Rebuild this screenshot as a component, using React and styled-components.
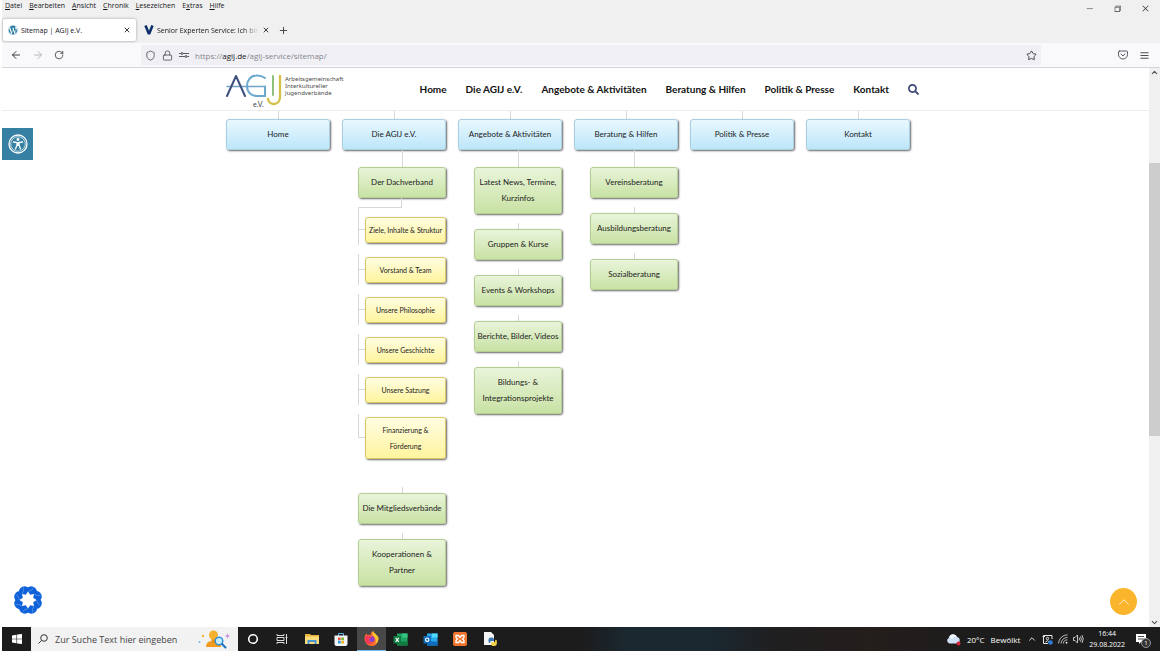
import React from "react";
import styled, { createGlobalStyle } from "styled-components";
import {
  FaSearch,
  FaWordpress,
} from "react-icons/fa";
import {
  VscChromeMinimize,
  VscChromeRestore,
  VscChromeClose,
} from "react-icons/vsc";
import {
  LuArrowLeft,
  LuArrowRight,
  LuRotateCw,
  LuShield,
  LuLock,
  LuStar,
  LuMenu,
  LuPlus,
  LuX,
  LuChevronUp,
  LuChevronDown,
} from "react-icons/lu";

const menus = ["Datei", "Bearbeiten", "Ansicht", "Chronik", "Lesezeichen", "Extras", "Hilfe"];
const accessKey = { Extras: 1 };

const navLinks = [
  "Home",
  "Die AGIJ e.V.",
  "Angebote & Aktivitäten",
  "Beratung & Hilfen",
  "Politik & Presse",
  "Kontakt",
];

const sitemap = [
  { name: "Home" },
  {
    name: "Die AGIJ e.V.",
    pages: [
      {
        name: "Der Dachverband",
        pages: [
          "Ziele, Inhalte & Struktur",
          "Vorstand & Team",
          "Unsere Philosophie",
          "Unsere Geschichte",
          "Unsere Satzung",
          "Finanzierung & Förderung",
        ],
      },
      { name: "Die Mitgliedsverbände" },
      { name: "Kooperationen & Partner" },
    ],
  },
  {
    name: "Angebote & Aktivitäten",
    pages: [
      { name: "Latest News, Termine, Kurzinfos" },
      { name: "Gruppen & Kurse" },
      { name: "Events & Workshops" },
      { name: "Berichte, Bilder, Videos" },
      { name: "Bildungs- & Integrationsprojekte" },
    ],
  },
  {
    name: "Beratung & Hilfen",
    pages: [
      { name: "Vereinsberatung" },
      { name: "Ausbildungsberatung" },
      { name: "Sozialberatung" },
    ],
  },
  { name: "Politik & Presse" },
  { name: "Kontakt" },
];

const Logo = () => (
  <svg width="56" height="32" viewBox="0 0 56 32" fill="none" strokeWidth="2" strokeLinecap="round">
    <path d="M39 12.500 H1" stroke="#6fa3c8" strokeWidth="1.500" />
    <path d="M1 22 L10 2 L19 22" stroke="#3d4f7c" strokeLinejoin="round" />
    <path d="M39 4 C36 2 33 1.300 30 1.600 C24 2 21 7 21 12 C21 18 25 22 31 22 H39 V12.500" stroke="#6aa9cd" />
    <path d="M47 2 V21" stroke="#8fc07c" />
    <path d="M54 2 V23 C54 32 43 32 42 25" stroke="#d4c047" strokeWidth="2.300" />
  </svg>
);

const AccessIcon = () => (
  <svg width="20" height="20" viewBox="0 0 20 20" fill="none" stroke="#fff">
    <circle cx="10" cy="10" r="9" strokeWidth="1.300" />
    <circle cx="10" cy="10" r="7.300" strokeWidth="0.700" />
    <circle cx="10" cy="5.500" r="1.400" fill="#fff" stroke="none" />
    <path d="M5.500 8 L9 8.600 V11 L7.500 15 M14.500 8 L11 8.600 V11 L12.500 15" strokeWidth="1.300" strokeLinecap="round" />
    <path d="M9 8.500 h2 v3.500 h-2 z" fill="#fff" stroke="none" />
  </svg>
);

const petals = [0, 45, 90, 135, 180, 225, 270, 315];

const CookieIcon = () => (
  <svg width="30" height="30" viewBox="-15 -15 30 30">
    {petals.map((a) => (
      <circle key={a} transform={`rotate(${a + 22})`} cy="-8.700" r="5.700" fill="#0f62d9" />
    ))}
    <path
      d="M0 -8.500 L2.200 -5.200 L6 -6 L5.200 -2.200 L8.500 0 L5.200 2.200 L6 6 L2.200 5.200 L0 8.500 L-2.200 5.200 L-6 6 L-5.200 2.200 L-8.500 0 L-5.200 -2.200 L-6 -6 L-2.200 -5.200 Z"
      fill="#fff"
    />
    {petals.map((a) => (
      <path
        key={a}
        transform={`rotate(${a})`}
        d="M0 -8.500 Q4 -9 5.500 -12.500"
        fill="none"
        stroke="#6ea5f0"
        strokeWidth="0.600"
      />
    ))}
  </svg>
);

const PermIcon = () => (
  <svg width="10" height="10" viewBox="0 0 10 10" fill="none" stroke="#5b5b66">
    <path d="M0 3.500 H2 M4 3.500 H10 M0 6.500 H6 M8 6.500 H10" />
    <path d="M3 2 V5 M7 5 V8" strokeWidth="1.400" />
  </svg>
);

const PocketIcon = () => (
  <svg width="10" height="10" viewBox="0 0 10 10" fill="none" stroke="#5b5b66" strokeLinecap="round" strokeLinejoin="round">
    <path d="M1.500 1 H8.500 Q9.500 1 9.500 2 V4.500 A4.500 4.500 0 0 1 0.500 4.500 V2 Q0.500 1 1.500 1 Z" />
    <path d="M3 4 L5 6 L7 4" />
  </svg>
);

const VIcon = () => (
  <svg width="10" height="10" viewBox="0 0 10 10" fill="none" stroke="#0b2f6b" strokeWidth="2.600">
    <path d="M1.500 0.500 L5 9 L8.500 0.500" strokeLinejoin="bevel" />
  </svg>
);

const WindowsIcon = () => (
  <svg width="10" height="10" viewBox="0 0 10 10" fill="#fff">
    <path d="M0 1.400 L4.500 0.700 V4.700 H0 Z M5.100 0.600 L10 0 V4.700 H5.100 Z M0 5.300 H4.500 V9.300 L0 8.600 Z M5.100 5.300 H10 V10 L5.100 9.400 Z" />
  </svg>
);

const LensIcon = () => (
  <svg width="10" height="10" viewBox="0 0 10 10" fill="none" stroke="#333">
    <circle cx="6" cy="4" r="3.300" />
    <path d="M3.600 6.400 L0.500 9.500" />
  </svg>
);

const SearchArt = () => (
  <svg width="34" height="20" viewBox="0 0 34 20">
    <path d="M8 18 Q8 12 14 12 H18 Q23 12 23 18 Z" fill="#f49a1f" />
    <path d="M13.500 9 h4 v5 h-4 z" fill="#e8901a" />
    <circle cx="15.500" cy="6" r="4.500" fill="#f6b22c" />
    <circle cx="21" cy="12" r="3.800" fill="#c7ebfb" stroke="#2f8fd6" strokeWidth="1.400" />
    <path d="M24 15 L27.500 18.500" stroke="#1a6fc0" strokeWidth="2" strokeLinecap="round" />
    <circle cx="5" cy="7" r="1.200" fill="#f5b73e" />
    <circle cx="1.500" cy="13" r="1" fill="#6cb7ee" />
    <path d="M29.500 4 L30.200 6.200 L32.500 7 L30.200 7.800 L29.500 10 L28.800 7.800 L26.500 7 L28.800 6.200 Z" fill="#c490dd" />
  </svg>
);

const CortanaIcon = () => (
  <svg width="12" height="12" viewBox="0 0 12 12" fill="none" stroke="#fff" strokeWidth="1.600">
    <circle cx="6" cy="6" r="4.300" />
  </svg>
);

const TaskViewIcon = () => (
  <svg width="12" height="12" viewBox="0 0 12 12" fill="none" stroke="#ddd">
    <path d="M1 1 V2.500 H8 V1 M1 11 V9.500 H8 V11 M1 4.500 H8 V7.500 H1 Z M10.500 1 V11 M9.500 4.500 H11.500" />
  </svg>
);

const FolderIcon = () => (
  <svg width="14" height="12" viewBox="0 0 14 12">
    <path d="M0 1 H5 L6 2 H14 V11 H0 Z" fill="#e9b43c" />
    <path d="M0 3.500 H14 V11 H0 Z" fill="#fbdc7c" />
    <path d="M2.500 7 H11.500 V11 H9.500 V9 H4.500 V11 H2.500 Z" fill="#4a94cf" />
  </svg>
);

const StoreIcon = () => (
  <svg width="14" height="14" viewBox="0 0 14 14">
    <path d="M4.500 4 V1.500 H9.500 V4" fill="none" stroke="#5fb4e8" />
    <path d="M0.500 3.500 H13.500 V12 Q13.500 14 11.500 14 H2.500 Q0.500 14 0.500 12 Z" fill="#f3f6f8" />
    <path d="M4 5.500 H6.700 V8.200 H4 Z" fill="#e8563a" />
    <path d="M7.300 5.500 H10 V8.200 H7.300 Z" fill="#7cb738" />
    <path d="M4 8.800 H6.700 V11.500 H4 Z" fill="#2b9be0" />
    <path d="M7.300 8.800 H10 V11.500 H7.300 Z" fill="#f4b61e" />
  </svg>
);

const FirefoxIcon = () => (
  <svg width="15" height="15" viewBox="0 0 14 14">
    <path d="M7 14 A6.700 6.700 0 0 1 0.500 7 Q0.500 4 2.200 2 L3 4 Q5 3 6 4 Q6 1.500 8.500 0 Q9 2 11 3 Q13.700 5 13.500 8 A6.600 6.600 0 0 1 7 14 Z" fill="#ff6a2b" />
    <path d="M8.500 0 Q9 2 11 3 Q13.700 5 13.500 8 Q13 11 10.500 12.500 Q12 8 9 5 Q7 3 8.500 0 Z" fill="#ffc62e" />
    <circle cx="7.300" cy="7.500" r="2.700" fill="#8d3ecb" />
    <path d="M1 5 Q4 4 7 6 Q5.500 8 4 7 Q4 11 8.500 11.500 Q4 13.500 1.500 10 Z" fill="#f5345c" />
  </svg>
);

const OfficeIcon = ({ back, mid, front, mark }) => (
  <svg width="15" height="13" viewBox="0 0 15 13">
    <path d="M4 0.500 H14.500 V12.500 H4 Z" fill={mid} />
    <path d="M9 0.500 H14.500 V4.500 H9 Z" fill={back} />
    <path d="M4 8.500 H14.500 V12.500 H4 Z" fill={front} />
    <path d="M0.500 3 H8 V10.500 H0.500 Z" fill={front} />
    {mark === "ring" ? (
      <circle cx="4.200" cy="6.700" r="1.700" fill="none" stroke="#fff" strokeWidth="1.100" />
    ) : (
      <path d="M2.700 4.800 L5.800 8.800 M5.800 4.800 L2.700 8.800" stroke="#fff" strokeWidth="1.100" />
    )}
  </svg>
);

const XamppIcon = () => (
  <svg width="14" height="14" viewBox="0 0 14 14">
    <rect width="14" height="14" rx="2" fill="#f0752e" />
    <path
      d="M3 3.500 H5.500 L7 5.500 L8.500 3.500 H11 V5.500 L9.500 7 L11 8.500 V10.500 H8.500 L7 8.500 L5.500 10.500 H3 V8.500 L4.500 7 L3 5.500 Z"
      fill="none"
      stroke="#fff"
      strokeWidth="1.300"
    />
  </svg>
);

const PythonIcon = () => (
  <svg width="14" height="14" viewBox="0 0 14 14">
    <path d="M1 0 H8 L11 3 V13 H1 Z" fill="#f4f4f4" />
    <path d="M5.500 9.500 V7.500 Q5.500 5.500 8 5.500 H9 Q11 5.500 11 7.500 V9 H8.500 Q7 9 7 11 Q5.500 11 5.500 9.500 Z" fill="#3d79b0" />
    <path d="M13.800 9 V11.500 Q13.800 14 11 14 H10 Q8 14 8 12.300 V10.300 H11.500 Q12.300 10 12.300 7.800 Q13.800 7.800 13.800 9 Z" fill="#f6d44a" />
  </svg>
);

const CloudIcon = () => (
  <svg width="15" height="13" viewBox="0 0 15 13">
    <path d="M3.500 10.500 A3 3 0 0 1 3 4.800 A4.200 4.200 0 0 1 11 4 A3.300 3.300 0 0 1 11 10.500 Z" fill="#cfe2f8" />
    <path d="M5 1.800 A4.200 4.200 0 0 1 11 4 Q8 3 6 6 Q4 4 3 4.800 Q3.500 2.500 5 1.800 Z" fill="#eef5fd" />
    <circle cx="12.500" cy="10.500" r="2" fill="#d4243c" />
  </svg>
);

const MeetIcon = () => (
  <svg width="11" height="11" viewBox="0 0 11 11" fill="none" stroke="#e8e8e8">
    <path d="M6 9.500 H1.500 V1.500 H10 V5 M0.500 2.500 H3" />
    <circle cx="5.500" cy="4.500" r="1.200" />
    <path d="M3.500 8 Q5.500 5.500 7.500 8" />
    <circle cx="8.500" cy="8.500" r="2.300" fill="#2f7fd8" stroke="none" />
  </svg>
);

const WifiIcon = () => (
  <svg width="10" height="10" viewBox="0 0 10 10" fill="none" stroke="#c8c8c8" strokeWidth="0.900">
    <path d="M0.500 9.500 A9 9 0 0 1 9.500 0.800 M3 9.500 A6.500 6.500 0 0 1 9.500 3.400 M5.300 9.500 A4 4 0 0 1 9.500 5.900" />
    <circle cx="8.500" cy="8.700" r="0.900" fill="#fff" stroke="none" />
  </svg>
);

const SoundIcon = () => (
  <svg width="11" height="10" viewBox="0 0 11 10" fill="none" stroke="#e8e8e8" strokeWidth="0.800">
    <path d="M0.500 3.500 H2 L4.500 1 V9 L2 6.500 H0.500 Z M6 3.500 Q7 5 6 6.500 M7.500 2.300 Q9.200 5 7.500 7.700 M9 1 Q11.500 5 9 9" />
  </svg>
);

const NoticeIcon = () => (
  <svg width="10" height="10" viewBox="0 0 10 10" fill="#fff">
    <path d="M0 0 H10 V8 H5 L3 10 V8 H0 Z" />
    <path d="M2 2.500 H8 M2 5 H8" stroke="#1d1d1d" strokeWidth="0.800" />
  </svg>
);

const App = () => {
  return (
    <Window>
      <GlobalStyle />
      <TitleBar>
        <MenuBar>
          {menus.map((menu) => {
            const at = accessKey[menu] || 0;
            return (
              <MenuButton key={menu}>
                {menu.slice(0, at)}
                <u>{menu[at]}</u>
                {menu.slice(at + 1)}
              </MenuButton>
            );
          })}
        </MenuBar>
        <WindowButtons>
          <IconButton aria-label="Minimieren"><VscChromeMinimize size={9} /></IconButton>
          <IconButton aria-label="Verkleinern"><VscChromeRestore size={9} /></IconButton>
          <IconButton aria-label="Schließen"><VscChromeClose size={9} /></IconButton>
        </WindowButtons>
      </TitleBar>

      <TabBar>
        <Tab $active>
          <FaWordpress size={10} color="#1b769c" />
          <TabTitle>Sitemap | AGIJ e.V.</TabTitle>
          <IconButton aria-label="Tab schließen"><LuX size={8} strokeWidth={3} /></IconButton>
        </Tab>
        <Tab>
          <VIcon />
          <TabTitle $fade>Senior Experten Service: Ich bin</TabTitle>
          <IconButton aria-label="Tab schließen"><LuX size={8} strokeWidth={3} /></IconButton>
        </Tab>
        <NewTab aria-label="Neuer Tab"><LuPlus size={11} /></NewTab>
      </TabBar>

      <Toolbar>
        <HistoryButtons>
          <IconButton aria-label="Zurück"><LuArrowLeft size={12} /></IconButton>
          <IconButton aria-label="Vor" disabled><LuArrowRight size={12} /></IconButton>
          <IconButton aria-label="Neu laden"><LuRotateCw size={10} /></IconButton>
        </HistoryButtons>
        <UrlBar>
          <LuShield size={11} />
          <LuLock size={11} />
          <PermIcon />
          <Url>
            https://<b>agij.de</b>/agij-service/sitemap/
          </Url>
          <IconButton aria-label="Lesezeichen hinzufügen"><LuStar size={11} /></IconButton>
        </UrlBar>
        <ToolbarEnd>
          <IconButton aria-label="Pocket"><PocketIcon /></IconButton>
          <IconButton aria-label="Menü"><LuMenu size={11} /></IconButton>
        </ToolbarEnd>
      </Toolbar>

      <Viewport>
        <Page>
          <SiteHeader>
            <HeaderInner>
              <Brand href="#">
                <LogoMark>
                  <Logo />
                  <LogoSuffix>e.V.</LogoSuffix>
                </LogoMark>
                <Claim>
                  Arbeitsgemeinschaft
                  <br />
                  Interkultureller
                  <br />
                  Jugendverbände
                </Claim>
              </Brand>
              <Nav>
                {navLinks.map((link) => (
                  <NavLink key={link} href="#">{link}</NavLink>
                ))}
                <IconButton aria-label="Suche"><FaSearch size={11} color="#3d4a78" /></IconButton>
              </Nav>
            </HeaderInner>
          </SiteHeader>

          <Tree>
            {sitemap.map((section) => (
              <Branch key={section.name}>
                <Stem $length={8} />
                <SectionLink href="#">{section.name}</SectionLink>
                {section.pages && (
                  <PageList>
                    {section.pages.map((page, i) => (
                      <PageItem key={page.name}>
                        <Stem $length={i === 0 ? 17 : 6} />
                        <PageLink href="#">{page.name}</PageLink>
                        {page.pages && (
                          <>
                            <Elbow />
                            <SubList>
                              {page.pages.map((sub) => (
                                <SubItem key={sub}>
                                  <Rail>
                                    <RailTop />
                                    <RailBottom />
                                  </Rail>
                                  <SubLink href="#">{sub}</SubLink>
                                </SubItem>
                              ))}
                            </SubList>
                          </>
                        )}
                      </PageItem>
                    ))}
                  </PageList>
                )}
              </Branch>
            ))}
          </Tree>

          <AccessButton aria-label="Barrierefreiheit"><AccessIcon /></AccessButton>
          <CookieButton aria-label="Cookie-Einstellungen"><CookieIcon /></CookieButton>
          <TopButton aria-label="Nach oben"><LuChevronUp size={18} strokeWidth={1} /></TopButton>
        </Page>
        <Scrollbar>
          <LuChevronUp size={9} strokeWidth={3} />
          <Track>
            <Thumb />
          </Track>
          <LuChevronDown size={9} strokeWidth={3} />
        </Scrollbar>
      </Viewport>

      <Taskbar>
        <TaskButton aria-label="Start"><WindowsIcon /></TaskButton>
        <TaskSearch>
          <LensIcon />
          <TaskInput aria-label="Suche" placeholder="Zur Suche Text hier eingeben" />
          <SearchArt />
        </TaskSearch>
        <TaskApps>
          <TaskButton aria-label="Cortana"><CortanaIcon /></TaskButton>
          <TaskButton aria-label="Taskansicht"><TaskViewIcon /></TaskButton>
          <TaskButton aria-label="Explorer"><FolderIcon /></TaskButton>
          <TaskButton aria-label="Store"><StoreIcon /></TaskButton>
          <TaskButton aria-label="Firefox" $active><FirefoxIcon /></TaskButton>
          <TaskButton aria-label="Excel">
            <OfficeIcon back="#33c481" mid="#21a366" front="#107c41" />
          </TaskButton>
          <TaskButton aria-label="Outlook">
            <OfficeIcon back="#50d9ff" mid="#28a8ea" front="#0f6cbd" mark="ring" />
          </TaskButton>
          <TaskButton aria-label="XAMPP"><XamppIcon /></TaskButton>
          <TaskButton aria-label="Python"><PythonIcon /></TaskButton>
        </TaskApps>
        <Tray>
          <Weather>
            <CloudIcon />
            <span>20°C</span>
            <span>Bewölkt</span>
          </Weather>
          <LuChevronUp size={10} />
          <MeetIcon />
          <WifiIcon />
          <SoundIcon />
          <Clock>
            <span>16:44</span>
            <span>29.08.2022</span>
          </Clock>
          <Notice>
            <NoticeIcon />
            <Badge>1</Badge>
          </Notice>
        </Tray>
      </Taskbar>
    </Window>
  );
};

export default App;

const GlobalStyle = createGlobalStyle`
  * {
    box-sizing: border-box;
  }
  body {
    margin: 0;
    background: #fff;
    font-family: "Open Sans", "Noto Sans", sans-serif;
  }
  a {
    color: inherit;
    text-decoration: none;
  }
  ul {
    margin: 0;
    padding: 0;
    list-style: none;
  }
  svg {
    display: block;
    flex: none;
  }
`;

const Window = styled.div`
  display: flex;
  flex-direction: column;
  height: 100vh;
  padding-left: 2px;
  color: #15141a;
`;

const TitleBar = styled.div`
  display: flex;
  justify-content: space-between;
  height: 17px;
  background: #f0f0f0;
`;

const MenuBar = styled.div`
  display: flex;
  align-items: flex-start;
  gap: 7px;
  padding-left: 3px;
`;

const MenuButton = styled.button`
  padding: 0;
  border: none;
  background: none;
  color: #15141a;
  font-family: inherit;
  font-size: 7px;
  line-height: 12px;
`;

const WindowButtons = styled.div`
  display: flex;
  align-items: center;
  gap: 19px;
  padding-right: 10px;
`;

const IconButton = styled.button`
  display: flex;
  padding: 0;
  border: none;
  background: none;
  color: #3b3b42;

  &:disabled {
    color: #b8b8bf;
  }
`;

const NewTab = styled(IconButton)`
  margin-left: 3px;
`;

const TabBar = styled.div`
  display: flex;
  align-items: center;
  gap: 3px;
  height: 26px;
  padding: 0 1px;
  background: #f0f0f0;
`;

const Tab = styled.div`
  display: flex;
  align-items: center;
  gap: 3px;
  width: 133px;
  height: 22px;
  padding: 0 5px;
  border-radius: 2px;
  background: ${(props) => (props.$active ? "#fff" : "none")};
  box-shadow: ${(props) => (props.$active ? "0 0 3px #999" : "none")};
`;

const TabTitle = styled.span`
  flex: 1;
  white-space: nowrap;
  font-size: 7px;
  mask-image: ${(props) =>
    props.$fade ? "linear-gradient(to right, #000 85%, transparent)" : "none"};
`;

const Toolbar = styled.div`
  display: flex;
  align-items: center;
  height: 25px;
  border-bottom: 1px solid #d4d4da;
  background: #f9f9fb;
`;

const HistoryButtons = styled.div`
  display: flex;
  align-items: center;
  gap: 10px;
  width: 139px;
  padding-left: 8px;
`;

const UrlBar = styled.div`
  display: flex;
  flex: 1;
  align-items: center;
  gap: 6px;
  height: 20px;
  padding: 0 4px;
  border-radius: 2px;
  background: #f0f0f4;
  color: #5b5b66;
`;

const Url = styled.span`
  flex: 1;
  color: #85858e;
  font-size: 8px;

  b {
    color: #15141a;
    font-weight: 400;
  }
`;

const ToolbarEnd = styled.div`
  display: flex;
  align-items: center;
  justify-content: flex-end;
  gap: 11px;
  width: 119px;
  padding-right: 10px;
`;

const Viewport = styled.div`
  display: flex;
  flex: 1;
  min-height: 0;
`;

const Page = styled.div`
  position: relative;
  flex: 1;
  overflow: hidden;
  font-family: Lato, sans-serif;
`;

const SiteHeader = styled.header`
  border-bottom: 1px solid #ececec;
`;

const HeaderInner = styled.div`
  display: flex;
  justify-content: space-between;
  max-width: 699px;
  height: 42px;
  margin: 0 auto;
  padding: 6px 6px 0 0;
`;

const Brand = styled.a`
  display: flex;
  gap: 3px;
`;

const LogoMark = styled.span`
  position: relative;
`;

const LogoSuffix = styled.span`
  position: absolute;
  left: 27px;
  bottom: 2px;
  color: #444;
  font-size: 7px;
  line-height: 8px;
`;

const Claim = styled.span`
  padding-top: 2px;
  color: #4a4a4a;
  font-family: "Noto Sans", sans-serif;
  font-size: 6px;
  line-height: 7px;
`;

const Nav = styled.nav`
  display: flex;
  align-items: center;
  gap: 19px;
  height: 31px;
`;

const NavLink = styled.a`
  color: #111;
  font-size: 10px;
  line-height: 13px;
  font-weight: 700;
`;

const Tree = styled.ul`
  display: grid;
  grid-template-columns: repeat(6, 1fr);
  column-gap: 12px;
  max-width: 699px;
  margin: 0 auto;
  padding-right: 15px;
`;

const Branch = styled.li`
  display: flex;
  flex-direction: column;
`;

const Stem = styled.div`
  width: 1px;
  height: ${(props) => props.$length}px;
  margin: 0 auto;
  background: #d8d8d8;
`;

const Box = styled.a`
  display: block;
  border: 1px solid;
  border-radius: 3px;
  box-shadow: 1px 1px 2px #666;
  color: #222;
  line-height: 16px;
  text-align: center;
`;

const SectionLink = styled(Box)`
  padding: 6px 0 7px;
  border-color: #a9cfe0;
  background: linear-gradient(#e8f8ff, #bde6fa);
  font-size: 8px;
`;

const PageList = styled.ul`
  display: flex;
  flex-direction: column;
  gap: 9px;
  padding-left: 16px;
`;

const PageItem = styled.li`
  display: flex;
  flex-direction: column;
`;

const PageLink = styled(Box)`
  padding: 6px 0 7px;
  border-color: #b5cf92;
  background: linear-gradient(#e9f4da, #c8e2a4);
  font-size: 8px;
`;

const Elbow = styled.div`
  width: 50%;
  height: 10px;
  border-right: 1px solid #d8d8d8;
  border-bottom: 1px solid #d8d8d8;
`;

const SubList = styled.ul`
  display: flex;
  flex-direction: column;
  gap: 9px;
  padding-bottom: 17px;
`;

const Rail = styled.div`
  display: flex;
  flex-direction: column;
  width: 7px;
`;

const RailTop = styled.div`
  flex: 1 1 0;
  border-left: 1px solid #d8d8d8;
  border-bottom: 1px solid #d8d8d8;
`;

const RailBottom = styled.div`
  flex: 1 1 0;
  border-left: 1px solid #d8d8d8;
`;

const SubLink = styled(Box)`
  flex: 1;
  margin: 3px 0 2px;
  padding: 4px 2px;
  border-color: #dcc766;
  background: linear-gradient(#fffde2, #fff49e);
  font-size: 7px;
`;

const SubItem = styled.li`
  display: flex;

  &:first-child ${SubLink} {
    margin-top: 9px;
  }

  &:first-child ${RailTop} {
    flex-basis: 6px;
  }

  &:last-child ${RailBottom} {
    border-color: transparent;
  }
`;

const AccessButton = styled.button`
  position: absolute;
  top: 60px;
  left: 0;
  display: grid;
  place-items: center;
  width: 31px;
  height: 32px;
  padding: 0;
  border: none;
  background: #3580a3;
`;

const CookieButton = styled.button`
  position: absolute;
  bottom: 12px;
  left: 11px;
  padding: 0;
  border: none;
  background: none;
`;

const TopButton = styled.button`
  position: absolute;
  right: 12px;
  bottom: 12px;
  display: grid;
  place-items: center;
  width: 27px;
  height: 27px;
  padding: 0;
  border: none;
  border-radius: 50%;
  background: #fbb52c;
  color: #fff;
`;

const Scrollbar = styled.div`
  display: flex;
  flex-direction: column;
  align-items: center;
  width: 11px;
  background: #f0f0f0;
  color: #555;
`;

const Track = styled.div`
  flex: 1;
  align-self: stretch;
  padding: 86px 0 0 0;
`;

const Thumb = styled.div`
  height: 60%;
  background: #cdcdcd;
`;

const Taskbar = styled.div`
  display: flex;
  align-items: center;
  height: 24px;
  background: linear-gradient(
    to right,
    #1c1c1c 50%,
    #1a2830 54%,
    #1a2830 61%,
    #201f20 67%,
    #241e1c 75%,
    #1c1c1c 84%
  );
  color: #fff;
`;

const TaskButton = styled.button`
  display: grid;
  place-items: center;
  width: 29px;
  height: 24px;
  padding: 0;
  border: none;
  border-bottom: ${(props) => (props.$active ? "1px solid #76b9ed" : "none")};
  background: ${(props) => (props.$active ? "#484848" : "none")};
`;

const TaskApps = styled.div`
  display: flex;
  justify-content: space-between;
  width: 266px;
`;

const TaskSearch = styled.div`
  display: flex;
  align-items: center;
  gap: 7px;
  width: 207px;
  height: 24px;
  padding: 0 6px 0 7px;
  background: #f2f2f2;
`;

const TaskInput = styled.input`
  flex: 1;
  min-width: 0;
  padding: 0;
  border: none;
  background: none;
  font-family: inherit;
  font-size: 9px;

  &::placeholder {
    color: #444;
  }
`;

const Tray = styled.div`
  display: flex;
  align-items: center;
  gap: 5px;
  margin-left: auto;
  padding-right: 14px;
  font-size: 8px;
`;

const Weather = styled.div`
  display: flex;
  align-items: center;
  gap: 6px;
  margin-right: 2px;
`;

const Clock = styled.div`
  display: flex;
  flex-direction: column;
  align-items: center;
  font-size: 7px;
  line-height: 11px;
`;

const Notice = styled.div`
  position: relative;
  margin-left: 6px;
`;

const Badge = styled.span`
  position: absolute;
  top: 4px;
  left: 5px;
  width: 10px;
  height: 10px;
  border: 1px solid #999;
  border-radius: 50%;
  background: #333;
  font-size: 6px;
  line-height: 8px;
  text-align: center;
`;
